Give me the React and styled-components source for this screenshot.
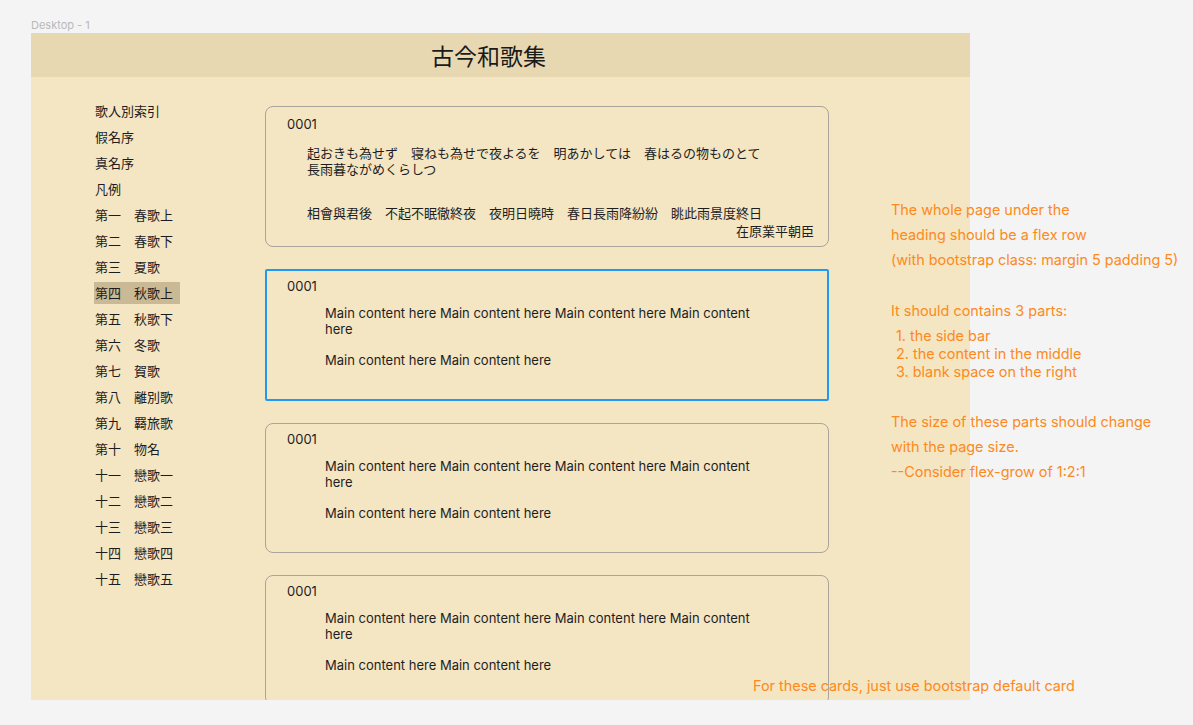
import React from 'react';
import styled, {createGlobalStyle} from 'styled-components';

const GlobalStyle = createGlobalStyle`
  html, body {
    margin: 0;
    padding: 0;
    background: #f4f4f4;
    font-family: 'Inter', 'Noto Sans CJK JP', sans-serif;
    overflow: hidden;
  }
`;

// figma-ish canvas around the frame
const Canvas = styled.div`
  position: relative;
  width: 100vw;
  height: 100vh;
  box-sizing: border-box;
  padding: 17px 0 0 31px;
  background: #f4f4f4;
`;

const FrameLabel = styled.div`
  height: 16px;
  line-height: 16px;
  font-size: 11px;
  color: #b9b9b9;
`;

const Frame = styled.div`
  width: 939px;
  height: 667px;
  overflow: hidden;
  background: #f4e5c3;
  display: flex;
  flex-direction: column;
`;

const Header = styled.header`
  flex: none;
  height: 44px;
  background: #e8d8b1;
  display: flex;
  align-items: center;
  justify-content: center;
  padding-right: 24px;
  font-size: 23px;
  color: #1a1a1a;
  font-family: 'Noto Sans CJK JP', sans-serif;
`;

const Body = styled.div`
  display: flex;
  align-items: flex-start;
  padding-left: 63px;
`;

const Sidebar = styled.nav`
  width: 171px;
  flex: none;
  padding-top: 23px;
  display: flex;
  flex-direction: column;
  align-items: flex-start;
  gap: 4px;
`;

const NavItem = styled.div`
  height: 22px;
  line-height: 22px;
  padding: 0 7px 0 1px;
  font-size: 13px;
  color: #1c1c1c;
  white-space: pre;
  background: ${p => (p.active ? '#cab995' : 'transparent')};
`;

const Content = styled.main`
  width: 564px;
  flex: none;
  padding-top: 29px;
  display: flex;
  flex-direction: column;
  gap: 22px;
`;

const Blank = styled.div`
  flex: 1;
`;

const Card = styled.div`
  box-sizing: border-box;
  border: ${p => (p.selected ? '2px solid #1f9af3' : '1px solid #a9a59b')};
  border-radius: ${p => (p.selected ? '2px' : '8px')};
  padding: ${p => (p.selected ? '7px 13px 31px 20px' : '7px 14px 31px 21px')};
  font-size: 13px;
  color: #1e1e1e;
`;

const PoemCardBox = styled(Card)`
  padding: 9px 14px 7px 21px;
`;

const Number = styled.div`
  line-height: 16px;
`;

const Poem = styled.div`
  margin-top: 13px;
  padding-left: 20px;
  line-height: 16px;
`;

const Kanbun = styled.div`
  margin-top: 28px;
  padding-left: 20px;
  line-height: 16px;
`;

const Author = styled.div`
  margin-top: 2px;
  text-align: right;
  line-height: 16px;
`;

const MainText = styled.div`
  margin-top: 11px;
  padding-left: 38px;
  width: 440px;
  line-height: 16px;
  p {
    margin: 0;
  }
  p + p {
    margin-top: 15px;
  }
`;

// sticky notes placed on the canvas, over the frame
const Note = styled.div`
  position: absolute;
  left: ${p => p.x}px;
  top: ${p => p.y}px;
  font-size: 14.4px;
  color: #fc8a20;
  white-space: nowrap;
`;

const NoteText = styled.div`
  line-height: ${p => p.lh || 25}px;
  margin-top: ${p => p.mt || 0}px;
  padding-left: ${p => p.indent || 0}px;
`;

const chapters = [
  '歌人別索引', '假名序', '真名序', '凡例',
  '第一　春歌上', '第二　春歌下', '第三　夏歌', '第四　秋歌上', '第五　秋歌下',
  '第六　冬歌', '第七　賀歌', '第八　離別歌', '第九　羇旅歌', '第十　物名',
  '十一　戀歌一', '十二　戀歌二', '十三　戀歌三', '十四　戀歌四', '十五　戀歌五',
];

const mainCards = [
  {id: 'a', selected: true},
  {id: 'b', selected: false},
  {id: 'c', selected: false},
];

function PoemCard() {
  return (
    <PoemCardBox>
      <Number>0001</Number>
      <Poem>
        起おきも為せず　寝ねも為せで夜よるを　明あかしては　春はるの物ものとて<br />
        長雨暮ながめくらしつ
      </Poem>
      <Kanbun>相會與君後　不起不眠徹終夜　夜明日曉時　春日長雨降紛紛　眺此雨景度終日</Kanbun>
      <Author>在原業平朝臣</Author>
    </PoemCardBox>
  );
}

function MainCard({selected}) {
  return (
    <Card selected={selected}>
      <Number>0001</Number>
      <MainText>
        <p>Main content here Main content here Main content here Main content here</p>
        <p>Main content here Main content here</p>
      </MainText>
    </Card>
  );
}

export default function App() {
  return (
    <Canvas>
      <GlobalStyle />
      <FrameLabel>Desktop - 1</FrameLabel>
      <Frame>
        <Header>古今和歌集</Header>
        <Body>
          <Sidebar>
            {chapters.map((c, i) => <NavItem key={c} active={i === 7}>{c}</NavItem>)}
          </Sidebar>
          <Content>
            <PoemCard />
            {mainCards.map(c => <MainCard key={c.id} selected={c.selected} />)}
          </Content>
          <Blank />
        </Body>
      </Frame>

      <Note x={891} y={197}>
        <NoteText>The whole page under the</NoteText>
        <NoteText>heading should be a flex row</NoteText>
        <NoteText>(with bootstrap class: margin 5 padding 5)</NoteText>
        <NoteText mt={26}>It should contains 3 parts:</NoteText>
        <NoteText lh={18} mt={4} indent={5}>1. the side bar</NoteText>
        <NoteText lh={18} indent={5}>2. the content in the middle</NoteText>
        <NoteText lh={18} indent={5}>3. blank space on the right</NoteText>
        <NoteText mt={28}>The size of these parts should change</NoteText>
        <NoteText>with the page size.</NoteText>
        <NoteText>--Consider flex-grow of 1:2:1</NoteText>
      </Note>
      <Note x={753} y={677}>
        <NoteText lh={18}>For these cards, just use bootstrap default card</NoteText>
      </Note>
    </Canvas>
  );
}
